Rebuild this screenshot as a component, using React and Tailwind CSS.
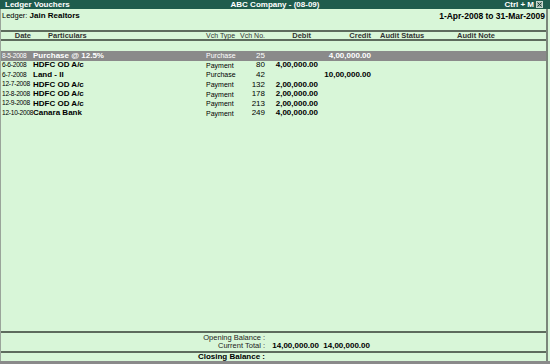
import React from "react";

const rows = [
  { d: "8-5-2008", p: "Purchase @ 12.5%", t: "Purchase", n: "25", dr: "", cr: "4,00,000.00", sel: true },
  { d: "6-6-2008", p: "HDFC OD A/c", t: "Payment", n: "80", dr: "4,00,000.00", cr: "" },
  { d: "6-7-2008", p: "Land - II", t: "Purchase", n: "42", dr: "", cr: "10,00,000.00" },
  { d: "12-7-2008", p: "HDFC OD A/c", t: "Payment", n: "132", dr: "2,00,000.00", cr: "" },
  { d: "12-8-2008", p: "HDFC OD A/c", t: "Payment", n: "178", dr: "2,00,000.00", cr: "" },
  { d: "12-9-2008", p: "HDFC OD A/c", t: "Payment", n: "213", dr: "2,00,000.00", cr: "" },
  { d: "12-10-2008", p: "Canara Bank", t: "Payment", n: "249", dr: "4,00,000.00", cr: "" },
];

export default function App() {
  return (
    <div
      className="w-[550px] h-[364px] bg-[#d8f6d8] flex flex-col overflow-hidden text-black"
      style={{ fontFamily: '"Liberation Sans", Arial, sans-serif' }}
    >
      {/* Title bar */}
      <div className="h-[9px] bg-[#1f5c4d] grid grid-cols-3 items-center text-white font-bold text-[8px] leading-none px-[5px] shrink-0">
        <div>Ledger Vouchers</div>
        <div className="text-center">ABC Company - (08-09)</div>
        <div className="flex justify-end items-center gap-[2px] pr-[2px]">
          <span>Ctrl + M</span>
          <span className="w-[7px] h-[7px] border border-[#c8d8d0] bg-[#9fb5ab] flex items-center justify-center">
            <svg width="5" height="5" viewBox="0 0 5 5">
              <path d="M0.5 0.5 L4.5 4.5 M4.5 0.5 L0.5 4.5" stroke="#1f3f35" strokeWidth="1" />
            </svg>
          </span>
        </div>
      </div>

      <div className="flex-1 flex flex-col border-l border-[#9aa59a] border-r-2 border-r-[#7a867a] mr-[2px]">
        {/* Ledger line */}
        <div className="h-[21px] flex justify-between items-start pt-[3px] pl-[1px] pr-[1px] leading-none shrink-0">
          <div className="text-[7.5px]">
            Ledger: <span className="font-bold text-[8px]">Jain Realtors</span>
          </div>
          <div className="font-bold text-[8.5px]">1-Apr-2008 to 31-Mar-2009</div>
        </div>

        {/* Header */}
        <div className="h-[11px] border-t-2 border-b-2 border-[#5d6b5d] flex items-center text-[#333] text-[7.5px] leading-none shrink-0">
          <div className="w-[32px] text-right pr-[2px] font-bold">Date</div>
          <div className="w-[173px] pl-[15px] font-bold">Particulars</div>
          <div className="w-[31px] text-[7px]">Vch Type</div>
          <div className="w-[28px] text-right text-[7px]">Vch No.</div>
          <div className="w-[55px] text-right pr-[9px] font-bold">Debit</div>
          <div className="w-[51px] text-right font-bold">Credit</div>
          <div className="w-[86px] pl-[9px] font-bold">Audit Status</div>
          <div className="flex-1 font-bold">Audit Note</div>
        </div>

        <div className="h-[10px] shrink-0" />

        {rows.map((r, i) => (
          <div
            key={i}
            className={
              "h-[9.6px] flex items-center leading-none shrink-0 " +
              (r.sel ? "bg-[#8a8a8a] text-white" : "")
            }
          >
            <div className="w-[32px] pl-[1px] text-[6.6px] tracking-[-0.25px] whitespace-nowrap overflow-hidden">{r.d}</div>
            <div className="w-[173px] font-bold text-[8px] whitespace-nowrap">{r.p}</div>
            <div className="w-[31px] text-[7px]">{r.t}</div>
            <div className="w-[28px] text-right text-[8px]">{r.n}</div>
            <div className="w-[55px] text-right font-bold text-[8px] pr-[2px]">{r.dr}</div>
            <div className="w-[51px] text-right font-bold text-[8px]">{r.cr}</div>
            <div className="flex-1" />
          </div>
        ))}

        <div className="flex-1" />

        {/* Footer */}
        <div className="border-t-2 border-[#5d6b5d] h-[20px] flex flex-col justify-center pb-[1px] shrink-0">
          <div className="h-[8.5px] flex items-center leading-none">
            <div className="w-[265px] text-right text-[7.5px] text-[#222] pr-[1px]">Opening Balance :</div>
          </div>
          <div className="h-[8.5px] flex items-center leading-none">
            <div className="w-[265px] text-right text-[7.5px] text-[#222] pr-[1px]">Current Total :</div>
            <div className="w-[53px] text-right font-bold text-[8px]">14,00,000.00</div>
            <div className="w-[51px] text-right font-bold text-[8px]">14,00,000.00</div>
          </div>
        </div>
        <div className="border-t-2 border-[#5d6b5d] h-[10px] flex items-center leading-none shrink-0">
          <div className="w-[265px] text-right font-bold text-[8px] pr-[1px]">Closing Balance :</div>
        </div>
      </div>
      <div className="h-[3px] bg-[#8a8a8a] shrink-0" />
    </div>
  );
}
